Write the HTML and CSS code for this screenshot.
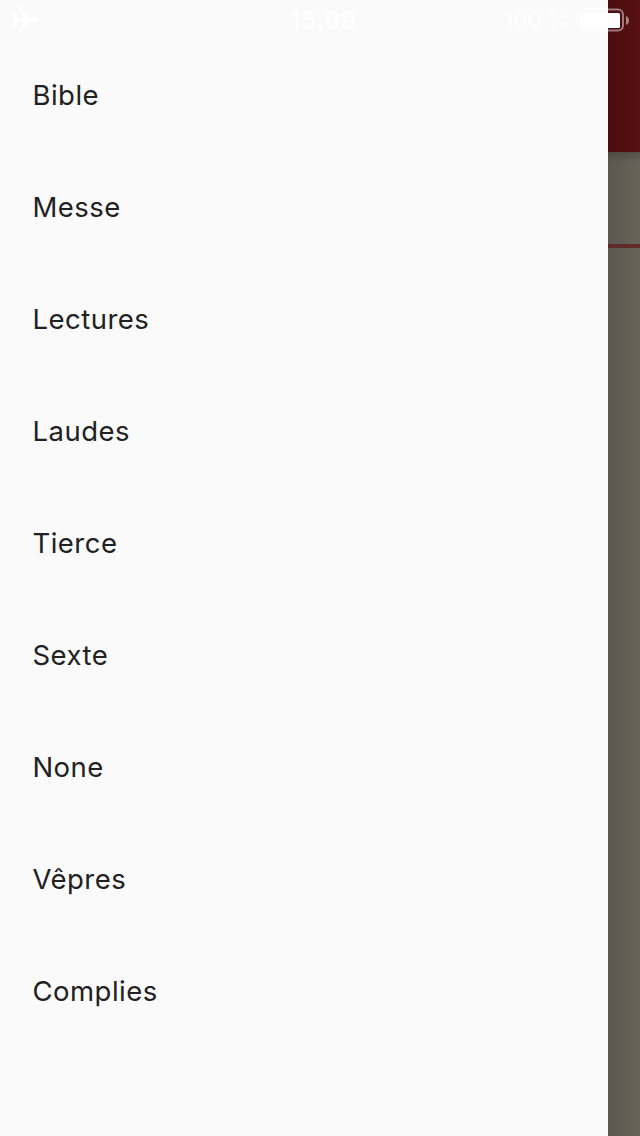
FILE: index.html
```html
<!DOCTYPE html>
<html lang="fr">
<head>
<meta charset="utf-8">
<title>Menu</title>
<link rel="stylesheet" href="styles.css">
</head>
<body>
<div class="screen">
  <nav class="drawer">
    <a class="item">Bible</a>
    <a class="item">Messe</a>
    <a class="item">Lectures</a>
    <a class="item">Laudes</a>
    <a class="item">Tierce</a>
    <a class="item">Sexte</a>
    <a class="item">None</a>
    <a class="item">Vêpres</a>
    <a class="item">Complies</a>
  </nav>
  <div class="page">
    <div class="appbar"></div>
    <div class="tabs"></div>
    <div class="content"></div>
  </div>
  <div class="status">
    <svg class="plane" width="28" height="26" viewBox="0 0 28 26"><path d="M0 4.500H2.500L6 10H11.500L6.500 0H9.500L17.500 10H24Q27 10.500 27 12.500T24 15H17.500L9.500 25H6.500L11.500 15H6L2.500 20.500H0L1.500 12.500Z" fill="#fff"/></svg>
    <span class="time">15:09</span>
    <div class="power">
      <span class="percent">100 %</span>
      <svg class="battery" width="54" height="24" viewBox="0 0 54 24"><rect x="1" y="1.500" width="46" height="21" rx="5" fill="none" stroke="#fff" stroke-opacity=".45" stroke-width="2"/><rect x="4" y="5" width="40" height="15" rx="1.500" fill="#fff"/><path d="M50 8Q53 9.500 53 12.500T50 17Z" fill="#fff" fill-opacity=".5"/></svg>
    </div>
  </div>
</div>
</body>
</html>
```
FILE: styles.css
```css
body {
  margin: 0;
  font-family: Inter, "Liberation Sans", sans-serif;
}

.screen {
  position: relative;
  display: flex;
  width: 640px;
  height: 1136px;
  overflow: hidden;
}

.drawer {
  box-sizing: border-box;
  width: 608px;
  padding-top: 39px;
  background: #fafafa;
}

.item {
  display: flex;
  align-items: center;
  height: 112px;
  padding-left: 32.4px;
  color: #212121;
  font-size: 27.5px;
  font-weight: 430;
  letter-spacing: 0.5px;
}

.page {
  display: flex;
  flex: 1;
  flex-direction: column;
}

.appbar {
  height: 152px;
  background: linear-gradient(90deg, #4c0d10, #560f12);
}

.tabs {
  box-sizing: border-box;
  height: 96px;
  border-bottom: 4px solid #622b2b;
  background:
    linear-gradient(180deg, rgba(0, 0, 0, 0.18), transparent 12px),
    linear-gradient(90deg, #5d584f, #69645a);
}

.content {
  flex: 1;
  background: linear-gradient(90deg, #5d584f, #69645a);
}

/* The system bar spans both the drawer and the page behind it. */
.status {
  position: absolute;
  inset: 0 0 auto;
  display: grid;
  grid-template-columns: 1fr auto 1fr;
  align-items: center;
  box-sizing: border-box;
  height: 40px;
  padding: 0 10px 0 12px;
  color: #fff;
  font-size: 24px;
}

.time {
  padding-left: 5px;
  font-weight: 600;
  letter-spacing: 0.4px;
}

.power {
  display: flex;
  align-items: center;
  justify-content: flex-end;
  gap: 6px;
}

.percent {
  font-size: 23px;
  letter-spacing: -0.3px;
}
```
